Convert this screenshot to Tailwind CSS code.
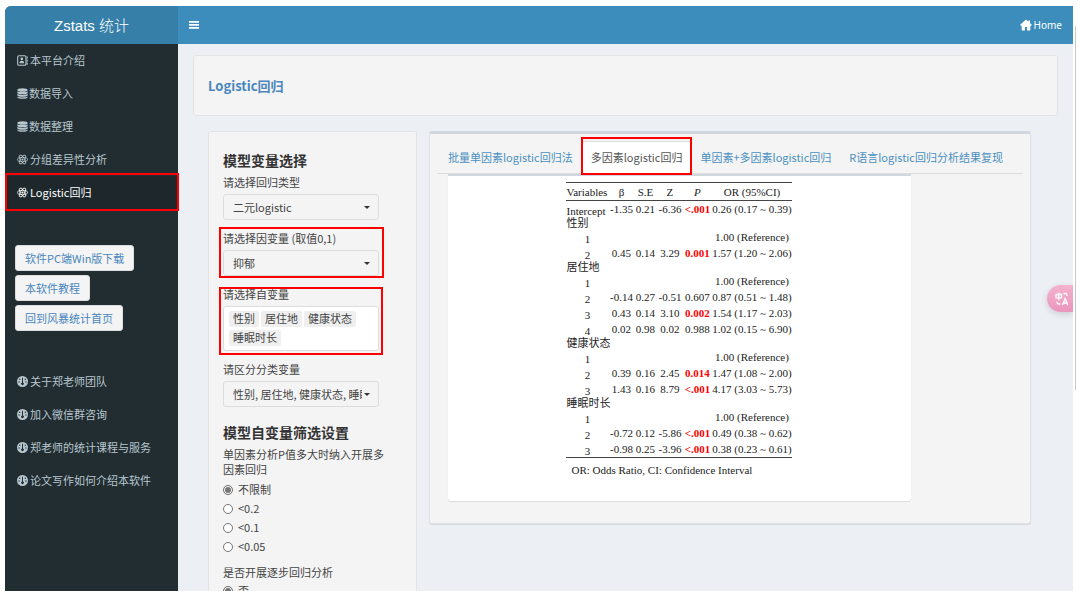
<!DOCTYPE html>
<html lang="zh-CN">
<head>
<meta charset="utf-8">
<title>Zstats 统计</title>
<script src="https://cdn.jsdelivr.net/npm/@tailwindcss/browser@4"></script>
</head>
<body class="bg-white font-['Noto_Sans_CJK_SC',sans-serif] text-[11px] leading-[15px] text-[#444]">
<svg class="hidden" aria-hidden="true">
  <symbol id="i-book" viewBox="0 0 16 16"><rect x="1" y="1" width="12" height="14" rx="2" fill="none" stroke="currentColor" stroke-width="1.6"/><circle cx="7" cy="5.6" r="2"/><path d="M3.6 12c0-2.4 1.2-3.6 3.4-3.6s3.4 1.2 3.4 3.6zM14 2h1.6v3H14zM14 6.500h1.600v3H14zM14 11h1.600v3H14z"/></symbol>
  <symbol id="i-db" viewBox="0 0 16 16"><ellipse cx="8" cy="2.8" rx="7.500" ry="2.600"/><path d="M.5 4.600c1.600 1.800 13.400 1.800 15 0v2.500c-1 2.400-14 2.400-15 0zM.5 8.500c1.600 1.800 13.400 1.800 15 0V11c-1 2.400-14 2.400-15 0zM.5 12.400c1.600 1.800 13.400 1.800 15 0v1c-1 3-14 3-15 0z"/></symbol>
  <symbol id="i-atom" viewBox="0 0 16 16"><g fill="none" stroke="currentColor" stroke-width="1.2"><ellipse cx="8" cy="8" rx="7.4" ry="3"/><ellipse cx="8" cy="8" rx="7.4" ry="3" transform="rotate(60 8 8)"/><ellipse cx="8" cy="8" rx="7.4" ry="3" transform="rotate(120 8 8)"/></g><circle cx="8" cy="8" r="1.5"/></symbol>
  <symbol id="i-gauge" viewBox="0 0 16 16"><path fill-rule="evenodd" d="M8 0a8 8 0 1 0 0 16A8 8 0 0 0 8 0zM7.300 2.600h1.400v6.800a2 2 0 1 1-1.400 0zM4 3.800a1 1 0 1 1 0 2 1 1 0 0 1 0-2zM12 3.800a1 1 0 1 1 0 2 1 1 0 0 1 0-2zM3 7.800a1 1 0 1 1 0 2 1 1 0 0 1 0-2zM13 7.800a1 1 0 1 1 0 2 1 1 0 0 1 0-2z"/></symbol>
</svg>

<div class="relative h-screen pt-[6px] pr-[7px] pb-[7px] pl-[5px]">
  <div class="relative flex h-full flex-col overflow-hidden rounded-tl-md bg-[#ecf0f5]">
    <header class="flex h-[38px] shrink-0 bg-[#3c8dbc] text-white">
      <a href="#" class="flex w-[173px] items-center justify-center bg-[#367fa9] font-['Liberation_Sans','Noto_Sans_CJK_SC',sans-serif] text-[15px] font-light">Zstats 统计</a>
      <nav class="flex flex-1 items-center justify-between pr-[11px] pl-[11px]">
        <button type="button" aria-label="菜单" class="flex"><svg class="h-[10px] w-[10px]" viewBox="0 0 10 10" fill="currentColor"><path d="M0 1h10v1.700H0zM0 4h10v1.700H0zM0 7h10v1.700H0z"/></svg></button>
        <a href="#" class="flex items-center gap-[2px] font-['Noto_Sans',sans-serif] text-[10px]">
          <svg class="h-[12px] w-[12px]" viewBox="0 0 16 16" fill="currentColor"><path d="M8 .6.2 7.800l1 1.500 1-.8V14c0 .8.400 1.400 1.200 1.400h3.200V10.600h2.800v4.800h3.200c.8 0 1.200-.6 1.200-1.400V8.500l1 .8 1-1.500-2.400-2.200V2h-2.200v1.600z"/></svg>Home</a>
      </nav>
    </header>

    <div class="flex min-h-0 flex-1">
      <aside class="w-[173px] shrink-0 bg-[#222d32] text-[#b8c7ce]">
        <ul>
          <li><a href="#" class="flex h-[33px] items-center gap-[2px] pl-[12px]"><svg class="h-[11px] w-[11px]" fill="currentColor"><use href="#i-book"/></svg>本平台介绍</a></li>
          <li><a href="#" class="flex h-[33px] items-center gap-[1px] pl-[12px]"><svg class="h-[11px] w-[11px]" fill="currentColor"><use href="#i-db"/></svg>数据导入</a></li>
          <li><a href="#" class="flex h-[33px] items-center gap-[1px] pl-[12px]"><svg class="h-[11px] w-[11px]" fill="currentColor"><use href="#i-db"/></svg>数据整理</a></li>
          <li><a href="#" class="flex h-[33px] items-center gap-[2px] pl-[12px]"><svg class="h-[11px] w-[11px]" fill="currentColor"><use href="#i-atom"/></svg>分组差异性分析</a></li>
          <li class="relative"><a href="#" class="flex h-[33px] items-center gap-[2px] bg-[#1e282c] pl-[12px] text-white"><svg class="h-[11px] w-[11px]" fill="currentColor"><use href="#i-atom"/></svg>Logistic回归</a>
            <span class="pointer-events-none absolute -top-[3px] -right-[1px] -bottom-[2px] left-0 z-10 border-2 border-[#f00]"></span></li>
        </ul>
        <div class="mt-[36px] flex flex-col items-start gap-[4px] pl-[10px] text-[#4a86bd]">
          <button type="button" class="h-[26px] rounded-[3px] border border-[#ddd] bg-[#f4f4f4] px-[9px]">软件PC端Win版下载</button>
          <button type="button" class="h-[26px] rounded-[3px] border border-[#ddd] bg-[#f4f4f4] px-[9px]">本软件教程</button>
          <button type="button" class="h-[26px] rounded-[3px] border border-[#ddd] bg-[#f4f4f4] px-[9px]">回到风暴统计首页</button>
        </div>
        <ul class="mt-[34px]">
          <li><a href="#" class="flex h-[33px] items-center gap-[2px] pl-[12px]"><svg class="h-[11px] w-[11px]" fill="currentColor"><use href="#i-gauge"/></svg>关于郑老师团队</a></li>
          <li><a href="#" class="flex h-[33px] items-center gap-[2px] pl-[12px]"><svg class="h-[11px] w-[11px]" fill="currentColor"><use href="#i-gauge"/></svg>加入微信群咨询</a></li>
          <li><a href="#" class="flex h-[33px] items-center gap-[2px] pl-[12px]"><svg class="h-[11px] w-[11px]" fill="currentColor"><use href="#i-gauge"/></svg>郑老师的统计课程与服务</a></li>
          <li><a href="#" class="flex h-[33px] items-center gap-[2px] pl-[12px]"><svg class="h-[11px] w-[11px]" fill="currentColor"><use href="#i-gauge"/></svg>论文写作如何介绍本软件</a></li>
        </ul>
      </aside>

      <main class="flex min-w-0 flex-1 flex-col pt-[11px] pr-[15px] pl-[15px]">
        <div class="flex h-[61px] shrink-0 items-center rounded-[3px] border border-[#e3e3e3] bg-[#f4f4f4] pl-[14px]">
          <h1 class="text-[13px] font-bold text-[#4a86bd]">Logistic回归</h1>
        </div>

        <div class="mt-[15px] flex min-h-0 flex-1 items-start gap-[12px] pr-[27px] pl-[15px]">
          <form class="w-[209px] shrink-0 rounded-[3px] border border-[#e3e3e3] bg-[#f4f4f4] px-[14px] pt-[18px] pb-[20px]">
            <h2 class="mb-[5px] text-[14px] leading-[20px] font-bold text-[#333]">模型变量选择</h2>
            <div class="flex w-[156px] flex-col gap-[11px]">
              <div>
                <label for="type" class="block">请选择回归类型</label>
                <div class="relative mt-[4px]">
                  <select id="type" class="h-[26px] w-full appearance-none rounded-[3px] border border-[#ddd] bg-[#f4f4f4] pr-[16px] pl-[9px]"><option>二元logistic</option></select>
                  <svg class="pointer-events-none absolute top-[12px] right-[9px] h-[3px] w-[6px]" viewBox="0 0 6 3" fill="#333"><path d="M0 0h6L3 3z"/></svg>
                </div>
              </div>
              <div class="relative">
                <label for="dep" class="block">请选择因变量 (取值0,1)</label>
                <div class="relative mt-[4px]">
                  <select id="dep" class="h-[26px] w-full appearance-none rounded-[3px] border border-[#ddd] bg-[#f4f4f4] pr-[16px] pl-[9px]"><option>抑郁</option></select>
                  <svg class="pointer-events-none absolute top-[12px] right-[9px] h-[3px] w-[6px]" viewBox="0 0 6 3" fill="#333"><path d="M0 0h6L3 3z"/></svg>
                </div>
                <span class="pointer-events-none absolute -top-[4px] -right-[5px] -bottom-[2px] -left-[4px] border-2 border-[#f00]"></span>
              </div>
              <div class="relative">
                <span id="indep" class="block">请选择自变量</span>
                <div role="listbox" aria-labelledby="indep" class="mt-[4px] flex h-[45px] flex-wrap content-start gap-x-[2px] gap-y-[3px] rounded-[3px] border border-[#ddd] bg-white px-[5px] pt-[4px]">
                  <span role="option" class="h-[16px] rounded-[2px] bg-[#efefef] px-[4px]">性别</span>
                  <span role="option" class="h-[16px] rounded-[2px] bg-[#efefef] px-[4px]">居住地</span>
                  <span role="option" class="h-[16px] rounded-[2px] bg-[#efefef] px-[4px]">健康状态</span>
                  <span role="option" class="h-[16px] rounded-[2px] bg-[#efefef] px-[4px]">睡眠时长</span>
                </div>
                <span class="pointer-events-none absolute -inset-x-[4px] top-0 -bottom-[4px] border-2 border-[#f00]"></span>
              </div>
              <div>
                <label for="cat" class="block">请区分分类变量</label>
                <div class="relative mt-[4px]">
                  <select id="cat" class="h-[26px] w-full appearance-none rounded-[3px] border border-[#ddd] bg-[#f4f4f4] pr-[16px] pl-[9px]"><option>性别, 居住地, 健康状态, 睡眠时长</option></select>
                  <svg class="pointer-events-none absolute top-[12px] right-[9px] h-[3px] w-[6px]" viewBox="0 0 6 3" fill="#333"><path d="M0 0h6L3 3z"/></svg>
                </div>
              </div>
            </div>
            <h2 class="mt-[15px] mb-[5px] text-[14px] leading-[20px] font-bold text-[#333]">模型自变量筛选设置</h2>
            <fieldset class="w-[166px]">
              <legend class="mb-[3px]">单因素分析P值多大时纳入开展多因素回归</legend>
              <label class="flex h-[19px] items-center gap-[5px]"><input type="radio" name="p" checked class="h-[10px] w-[10px] appearance-none rounded-full border border-[#767676] bg-white checked:bg-[#767676] checked:shadow-[inset_0_0_0_1px_#fff]">不限制</label>
              <label class="flex h-[19px] items-center gap-[5px]"><input type="radio" name="p" class="h-[10px] w-[10px] appearance-none rounded-full border border-[#767676] bg-white">&lt;0.2</label>
              <label class="flex h-[19px] items-center gap-[5px]"><input type="radio" name="p" class="h-[10px] w-[10px] appearance-none rounded-full border border-[#767676] bg-white">&lt;0.1</label>
              <label class="flex h-[19px] items-center gap-[5px]"><input type="radio" name="p" class="h-[10px] w-[10px] appearance-none rounded-full border border-[#767676] bg-white">&lt;0.05</label>
            </fieldset>
            <fieldset class="mt-[9px]">
              <legend class="mb-px">是否开展逐步回归分析</legend>
              <label class="flex h-[19px] items-center gap-[5px]"><input type="radio" name="step" checked class="h-[10px] w-[10px] appearance-none rounded-full border border-[#767676] bg-white checked:bg-[#767676] checked:shadow-[inset_0_0_0_1px_#fff]">否</label>
            </fieldset>
          </form>

          <section class="min-w-0 flex-1 rounded-[3px] border border-t-[3px] border-[#e0e2e6] border-t-[#d2d6de] bg-[#f4f4f4] px-[7px] pt-[7px] pb-[22px] shadow-[0_1px_1px_rgba(0,0,0,0.1)]">
            <div role="tablist" class="flex border-b border-[#ddd] pl-[2px] whitespace-nowrap text-[#4a90c0]">
              <button type="button" role="tab" class="h-[32px] px-[9px]">批量单因素logistic回归法</button>
              <button type="button" role="tab" aria-selected="true" class="relative h-[32px] rounded-t-[3px] border border-b-0 border-[#ddd] bg-white px-[8px] text-[#555]">多因素logistic回归<span class="pointer-events-none absolute -inset-x-[2px] -top-[5px] -bottom-[2px] z-10 border-2 border-[#f00]"></span></button>
              <button type="button" role="tab" class="h-[32px] px-[9px]">单因素+多因素logistic回归</button>
              <button type="button" role="tab" class="h-[32px] px-[9px]">R语言logistic回归分析结果复现</button>
            </div>
            <div role="tabpanel" class="ml-[11px] h-[327px] w-[79%] rounded-b-[3px] border-t-2 border-[#d2d6de] bg-white pt-[6px] shadow-[0_1px_1px_rgba(0,0,0,0.1)]">
              <table class="mx-auto w-[226px] table-fixed border-collapse text-center font-['Liberation_Serif','Noto_Sans_CJK_SC',serif] leading-[16px] whitespace-nowrap text-[#222] [&_td]:p-0 [&_th]:p-0">
                <colgroup><col class="w-[42px]"><col class="w-[26px]"><col class="w-[22px]"><col class="w-[27px]"><col class="w-[28px]"><col></colgroup>
                <thead><tr class="h-[18px] border-y border-[#444] [&>th]:font-normal"><th class="text-left">Variables</th><th>β</th><th>S.E</th><th>Z</th><th class="italic">P</th><th>OR (95%CI)</th></tr></thead>
                <tbody class="border-b border-[#444] [&_b]:text-[#f00] [&_td]:align-top [&_th]:align-bottom [&_th]:leading-[12px] [&_th]:font-normal">
                  <tr class="h-[16px]"><th scope="row" class="text-left">Intercept</th><td>-1.35</td><td>0.21</td><td>-6.36</td><td><b>&lt;.001</b></td><td>0.26 (0.17 ~ 0.39)</td></tr>
                  <tr class="h-[12px]"><th scope="rowgroup" colspan="6" class="text-left">性别</th></tr>
                  <tr class="h-[16px]"><th scope="row">1</th><td></td><td></td><td></td><td></td><td>1.00 (Reference)</td></tr>
                  <tr class="h-[16px]"><th scope="row">2</th><td>0.45</td><td>0.14</td><td>3.29</td><td><b>0.001</b></td><td>1.57 (1.20 ~ 2.06)</td></tr>
                  <tr class="h-[12px]"><th scope="rowgroup" colspan="6" class="text-left">居住地</th></tr>
                  <tr class="h-[16px]"><th scope="row">1</th><td></td><td></td><td></td><td></td><td>1.00 (Reference)</td></tr>
                  <tr class="h-[16px]"><th scope="row">2</th><td>-0.14</td><td>0.27</td><td>-0.51</td><td>0.607</td><td>0.87 (0.51 ~ 1.48)</td></tr>
                  <tr class="h-[16px]"><th scope="row">3</th><td>0.43</td><td>0.14</td><td>3.10</td><td><b>0.002</b></td><td>1.54 (1.17 ~ 2.03)</td></tr>
                  <tr class="h-[16px]"><th scope="row">4</th><td>0.02</td><td>0.98</td><td>0.02</td><td>0.988</td><td>1.02 (0.15 ~ 6.90)</td></tr>
                  <tr class="h-[12px]"><th scope="rowgroup" colspan="6" class="text-left">健康状态</th></tr>
                  <tr class="h-[16px]"><th scope="row">1</th><td></td><td></td><td></td><td></td><td>1.00 (Reference)</td></tr>
                  <tr class="h-[16px]"><th scope="row">2</th><td>0.39</td><td>0.16</td><td>2.45</td><td><b>0.014</b></td><td>1.47 (1.08 ~ 2.00)</td></tr>
                  <tr class="h-[16px]"><th scope="row">3</th><td>1.43</td><td>0.16</td><td>8.79</td><td><b>&lt;.001</b></td><td>4.17 (3.03 ~ 5.73)</td></tr>
                  <tr class="h-[12px]"><th scope="rowgroup" colspan="6" class="text-left">睡眠时长</th></tr>
                  <tr class="h-[16px]"><th scope="row">1</th><td></td><td></td><td></td><td></td><td>1.00 (Reference)</td></tr>
                  <tr class="h-[16px]"><th scope="row">2</th><td>-0.72</td><td>0.12</td><td>-5.86</td><td><b>&lt;.001</b></td><td>0.49 (0.38 ~ 0.62)</td></tr>
                  <tr class="h-[16px]"><th scope="row">3</th><td>-0.98</td><td>0.25</td><td>-3.96</td><td><b>&lt;.001</b></td><td>0.38 (0.23 ~ 0.61)</td></tr>
                </tbody>
                <tfoot><tr class="h-[24px]"><td colspan="6" class="text-left"><span class="pl-[5px]">OR: Odds Ratio, CI: Confidence Interval</span></td></tr></tfoot>
              </table>
            </div>
          </section>
        </div>
      </main>
    </div>

    <button type="button" aria-label="翻译" class="absolute top-[279px] right-0 flex h-[27px] w-[26px] items-center rounded-l-full bg-linear-to-b from-[#f4b2cf] to-[#ea96bd] pl-[8px] text-white shadow-[0_2px_6px_rgba(0,0,0,0.15)]">
      <svg class="h-[14px] w-[14px]" viewBox="0 0 14 14" fill="none" stroke="currentColor" stroke-width="1.3"><path d="M1 2.500h5.500v3.300H1zM3.750.8v7.400M8.500 1.500h1.700q1.800 0 1.800 1.800v.7M2 9.500v.8q0 1.700 1.700 1.700H5.500M7.500 13l2.600-6.500L12.800 13M8.400 11h3.500"/></svg>
    </button>
  </div>
  <div class="absolute top-[26px] right-[4px] h-[364px] w-px bg-[#c8c8c8]"></div>
</div>
</body>
</html>
